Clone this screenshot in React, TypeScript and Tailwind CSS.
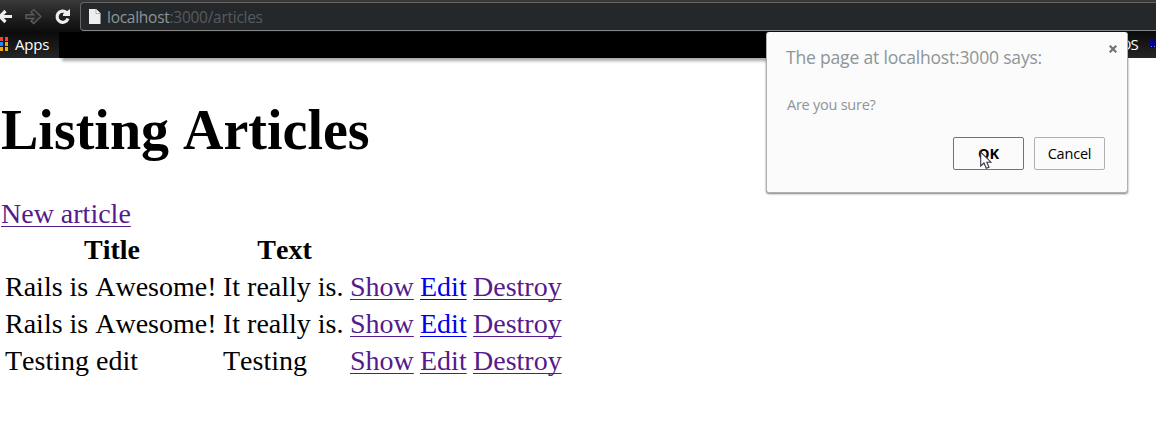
import type { ReactNode } from "react";

const articles = [
  { title: "Rails is Awesome!", text: "It really is.", edited: false },
  { title: "Rails is Awesome!", text: "It really is.", edited: false },
  { title: "Testing edit", text: "Testing", edited: true },
];

const appDots = [
  "bg-[#e8453c]", "bg-[#f0483e]", "bg-[#1a8cff]", "bg-[#f5a70a]", "bg-[#f5a70a]", "bg-[#f5b10a]",
];

function Toolbar() {
  return (
    <div className="flex h-8 bg-linear-to-b from-[#3b3938] via-[#222] to-[#0c0c0c]">
      <svg className="h-8 w-20 shrink-0" viewBox="0 0 80 32" fill="none">
        <path d="M12 16.5H0M5.5 11L0 16.5L5.5 22" stroke="#eeeeee" strokeWidth="3.2" />
        <path d="M26 14.7H33.5L31 12L33.7 9.6L41 16.6L33.7 23.6L31 21.2L33.5 18.5H26Z" fill="#292929" stroke="#5a5a5a" strokeWidth="1.4" />
        <path d="M66.5 12.6A5.6 5.6 0 1 0 68 18.5" stroke="#eeeeee" strokeWidth="3.2" />
        <path d="M70 9V16H63V14Z" fill="#eeeeee" />
      </svg>
      <div className="mt-0.5 flex h-[29px] flex-1 items-center rounded-l border border-r-0 border-[#656667] border-b-[#858585] bg-[#24282b] pl-2">
        <svg className="h-[15px] w-3 shrink-0" viewBox="0 0 12 15">
          <path d="M0 0H7L11.5 4.5V15H0Z" fill="#eeeeee" />
          <path d="M7 0V4.5H11.5" fill="#ffffff" stroke="#999999" strokeWidth="0.8" />
        </svg>
        <span className="ml-1.5 whitespace-nowrap font-['Open_Sans',sans-serif] text-[15.5px] leading-5 tracking-[-0.27px] text-[#555b5e]">
          <span className="text-[#8b9699]">localhost</span>:3000/articles
        </span>
      </div>
    </div>
  );
}

function BookmarksBar() {
  return (
    <div className="relative flex h-[26px] justify-between bg-linear-to-b from-[#0b0b0b] to-[#262626] font-['Open_Sans',sans-serif] text-[15px] leading-[24px] text-white">
      <div className="flex w-[59px] shrink-0 items-start">
        <div className="mt-[5px] grid grid-cols-2 gap-x-[2px] gap-y-px">
          {appDots.map((c, i) => (
            <span key={i} className={`h-[4px] w-[3px] ${c}`} />
          ))}
        </div>
        <span className="ml-[7px] tracking-[-0.2px]">Apps</span>
      </div>
      <div className="w-[708px] bg-black shadow-[3px_3px_3px_rgba(0,0,0,0.35)]" />
      <div className="flex flex-1 items-start justify-end">
        <span className="mr-3 tracking-[-0.8px]">OS</span>
        <span className="mt-2 flex h-2 w-1.5 items-end gap-0.5 bg-[#000090] pb-px pl-px">
          <span className="h-px w-px bg-[#8080dd]" />
          <span className="h-px w-px bg-[#8080dd]" />
        </span>
      </div>
    </div>
  );
}

function PageLink({ children, fresh = false }: { children: ReactNode; fresh?: boolean }) {
  return (
    <a href="#" className={`underline decoration-1 underline-offset-[3px] [text-decoration-skip-ink:none] ${fresh ? "text-[#0000ee]" : "text-[#551a8b]"}`}>
      {children}
    </a>
  );
}

function Dialog() {
  return (
    <div className="absolute left-[766px] top-8 flex h-[161px] w-[362px] flex-col rounded-[3px] border border-t-0 border-[#b0b0b0] bg-[#fbfbfb] pl-5 pr-[22px] font-['Open_Sans',sans-serif] shadow-[0_1px_2px_rgba(0,0,0,0.5)]">
      <svg className="absolute right-[10px] top-[13px] h-2 w-2" viewBox="0 0 8 8">
        <path d="M0.7 0.7L7.3 7.3M7.3 0.7L0.7 7.3" stroke="#737373" strokeWidth="2.2" />
      </svg>
      <h2 className="-ml-px mt-[11px] whitespace-nowrap text-[17.5px] leading-7 tracking-[-0.18px] text-[#8d9599]">The page at localhost:3000 says:</h2>
      <p className="mt-6 text-[14.5px] leading-5 tracking-[-0.25px] text-[#8d9599]">Are you sure?</p>
      <div className="mt-[22px] flex justify-end gap-[10px] text-[14.5px] tracking-[-0.2px] text-black">
        <button className="h-[33px] w-[71px] rounded-[2px] border border-[#4477dd] font-bold">OK</button>
        <button className="h-[33px] w-[71px] rounded-[2px] border border-[#b0b0b0]">Cancel</button>
      </div>
      <svg className="absolute left-[213px] top-[119px] h-5 w-3" viewBox="0 0 12 20">
        <path d="M0.7 1V15L4 12L6.3 17.3L9 16.2L6.8 11.2H11Z" fill="#ffffff" stroke="#333344" strokeWidth="1.1" />
      </svg>
    </div>
  );
}

export default function App() {
  return (
    <div className="relative h-[429px] w-[1156px] overflow-hidden bg-white">
      <Toolbar />
      <BookmarksBar />
      <main className="pl-px pt-10 font-['Liberation_Serif',serif] text-[28px] leading-8 text-black [font-kerning:none]">
        <h1 className="text-[56px] font-bold leading-[64px]">Listing Articles</h1>
        <div className="mt-9">
          <PageLink>New article</PageLink>
        </div>
        <table className="ml-1 mt-px border-separate border-spacing-0 whitespace-nowrap">
          <thead>
            <tr className="h-[37px]">
              <th className="w-[218px] p-0 pr-1">Title</th>
              <th className="w-[127px] p-0 pr-1">Text</th>
              <th colSpan={3} />
            </tr>
          </thead>
          <tbody>
            {articles.map((a, i) => (
              <tr key={i} className="h-[37px]">
                <td className="p-0">{a.title}</td>
                <td className="p-0">{a.text}</td>
                <td className="w-[70px] p-0"><PageLink>Show</PageLink></td>
                <td className="w-[53px] p-0"><PageLink fresh={!a.edited}>Edit</PageLink></td>
                <td className="p-0"><PageLink>Destroy</PageLink></td>
              </tr>
            ))}
          </tbody>
        </table>
      </main>
      <Dialog />
    </div>
  );
}
